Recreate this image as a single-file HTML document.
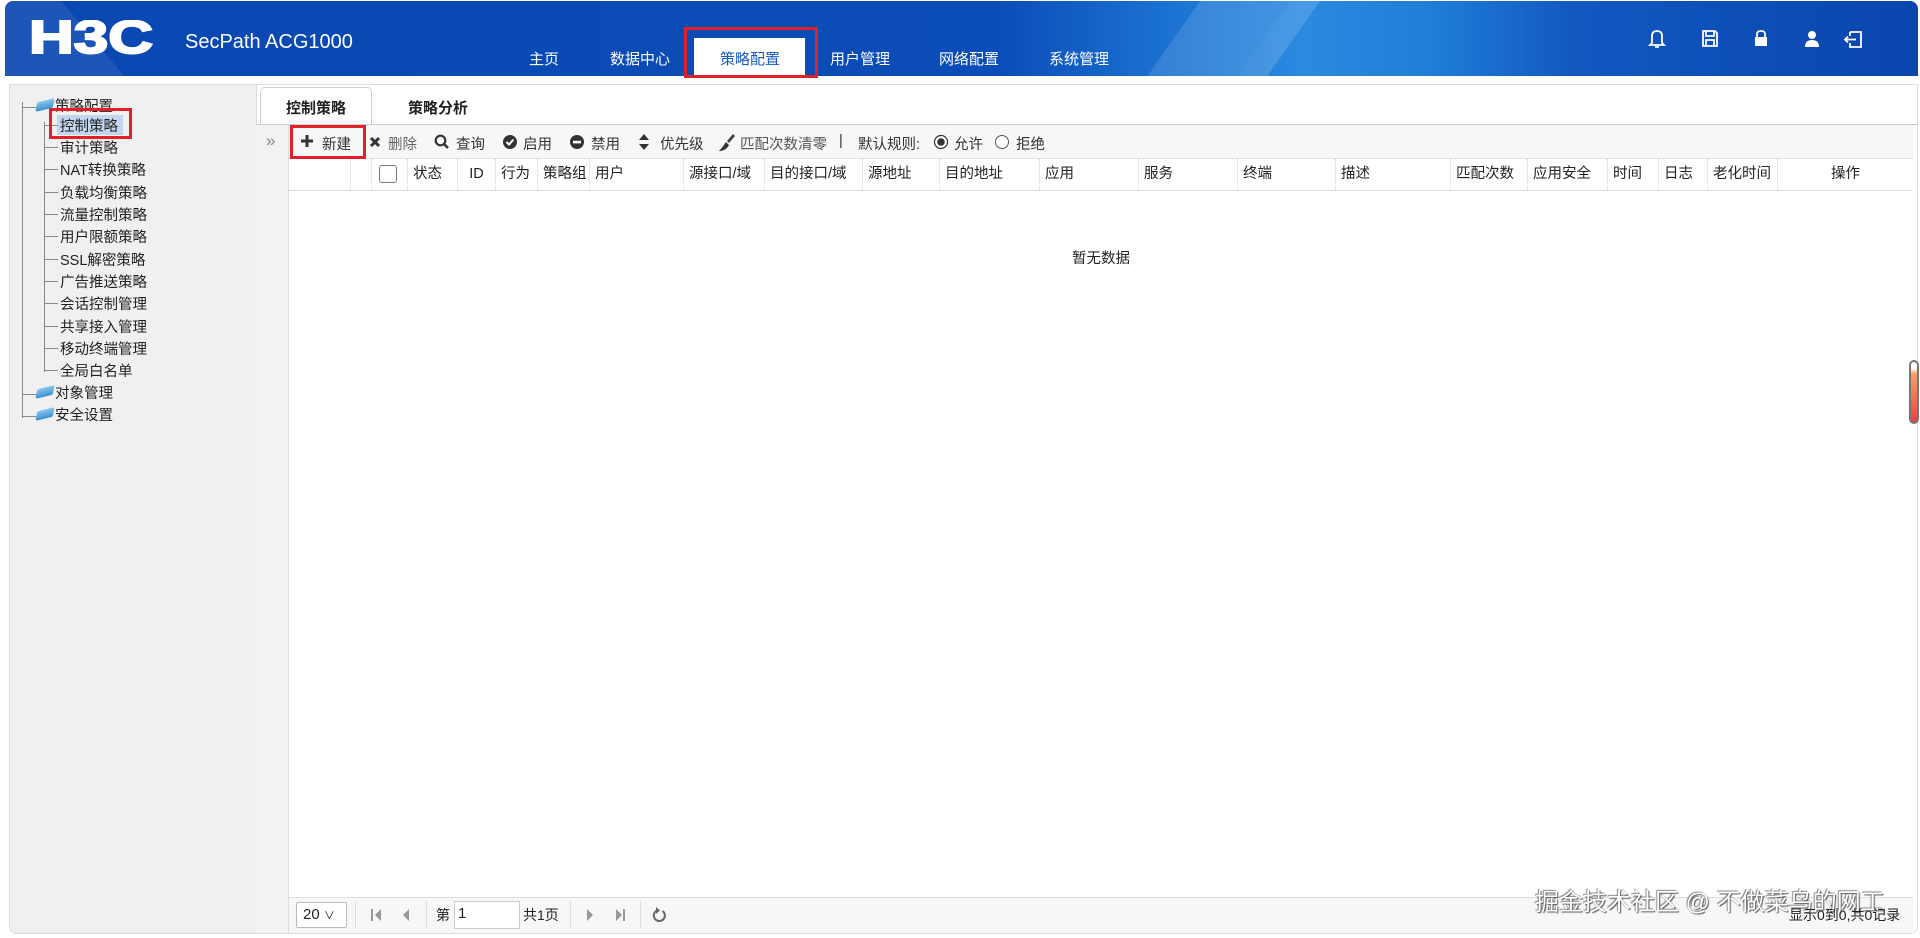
<!DOCTYPE html>
<html><head><meta charset="utf-8">
<style>
*{margin:0;padding:0;box-sizing:border-box}
body{width:1920px;height:938px;overflow:hidden;background:#fff;font-family:"Liberation Sans","Noto Sans CJK SC",sans-serif;font-size:14px;color:#222;position:relative}
.a{position:absolute;white-space:nowrap}
#hdr{left:5px;top:1px;width:1913px;height:75px;border-radius:8px 8px 0 0;overflow:hidden;background:linear-gradient(90deg,#0a47b2 0%,#0b4db8 52%,#1a6fd0 60%,#2a8ae0 68%,#2080d8 74%,#1258c0 82%,#0d4fb8 90%,#0a46ae 100%)}
.nav{top:48px;color:#fff;font-size:15px}
.tr{font-size:14.5px;color:#222}
.th{position:absolute;top:0;height:31px;border-right:1px dotted #d0d0d0;line-height:31px;padding-left:5px;font-size:14.5px}
.tb{top:133px;font-size:14.5px;color:#333}
</style></head><body>
<div id="hdr" class="a">
  <div class="a" style="left:1160px;top:-20px;width:90px;height:140px;background:rgba(255,255,255,.12);transform:skewX(-35deg)"></div>
  <div class="a" style="left:1250px;top:-20px;width:30px;height:140px;background:rgba(255,255,255,.15);transform:skewX(-35deg)"></div>
  <div class="a" style="left:-30px;top:-10px;width:120px;height:100px;background:rgba(255,255,255,.08);transform:skewX(40deg)"></div>
</div>
<svg class="a" style="left:28px;top:20px" width="130" height="36"><text x="1" y="33" font-family="Liberation Sans" font-weight="bold" font-size="46" fill="#fff" stroke="#fff" stroke-width="2" textLength="124" lengthAdjust="spacingAndGlyphs">H3C</text></svg>
<div class="a" style="left:185px;top:31px;color:#fff;font-size:20px">SecPath ACG1000</div>
<div class="a nav" style="left:529px">主页</div>
<div class="a nav" style="left:610px">数据中心</div>
<div class="a" style="left:694px;top:38px;width:111px;height:38px;background:#fff"></div>
<div class="a nav" style="left:720px;color:#1a5bbf">策略配置</div>
<div class="a" style="left:684px;top:27px;width:134px;height:51px;border:3px solid #e0202a"></div>
<div class="a nav" style="left:830px">用户管理</div>
<div class="a nav" style="left:939px">网络配置</div>
<div class="a nav" style="left:1049px">系统管理</div>
<svg class="a" style="left:1647px;top:28px" width="220" height="22" fill="none" stroke="#fff" stroke-width="1.8">
 <path d="M5 15 L5 8 Q5 3 10 3 Q15 3 15 8 L15 15 L17 17 L3 17 Z M8 19 L12 19"/>
 <path d="M56 3 L68 3 L70 5 L70 18 L56 18 Z M59 3 L59 8 L67 8 L67 3 M59 18 L59 12 L67 12 L67 18"/>
 <path d="M110 9 L110 6 Q110 3 114 3 Q118 3 118 6 L118 9"/><rect x="108" y="9" width="12" height="9" fill="#fff" stroke="none"/>
 <circle cx="165" cy="7" r="4" fill="#fff" stroke="none"/><path d="M158 19 Q158 12 165 12 Q172 12 172 19 Z" fill="#fff" stroke="none"/>
 <path d="M203 4 L214 4 L214 19 L203 19 L203 15 M203 8 L203 4 M198 11.5 L209 11.5 M201 8.5 L198 11.5 L201 14.5"/>
</svg>

<!-- sidebar -->
<div class="a" style="left:9px;top:84px;width:247px;height:850px;background:#f0f0f0;border:1px solid #ddd;border-right:none;border-radius:0 0 0 8px"></div>
<div class="a" style="left:22px;top:102px;width:1px;height:316px;background:#888"></div>
<div class="a" style="left:44px;top:122px;width:1px;height:250px;background:#888"></div>
<div class="a" style="left:57px;top:115px;width:66px;height:20px;background:#c2d6ef"></div>
<div id="tree"></div>
<div class="a" style="left:49px;top:108px;width:83px;height:31px;border:3px solid #e0202a"></div>

<!-- main -->
<div class="a" style="left:256px;top:84px;width:1662px;height:850px;border:1px solid #ddd;border-radius:0 0 8px 0"></div>
<div class="a" style="left:260px;top:87px;width:112px;height:38px;background:#fff;border:1px solid #ccc;border-bottom:none;border-radius:5px 5px 0 0"></div>
<div class="a" style="left:286px;top:97px;font-weight:bold;font-size:15px">控制策略</div>
<div class="a" style="left:408px;top:97px;font-weight:bold;font-size:15px">策略分析</div>
<div class="a" style="left:256px;top:124px;width:1662px;height:1px;background:#ccc"></div>
<div class="a" style="left:256px;top:125px;width:33px;height:808px;background:#f2f2f2;border-right:1px solid #ddd"></div>
<div class="a" style="left:266px;top:131px;color:#888;font-size:17px">»</div>
<div class="a" style="left:289px;top:125px;width:1625px;height:34px;background:#f7f7f7;border-bottom:1px solid #e0e0e0"></div>
<svg class="a" style="left:300px;top:134px" width="14" height="14"><path d="M7 1 V13 M1 7 H13" stroke="#333" stroke-width="3"/></svg>
<div class="a tb" style="left:322px">新建</div>
<div class="a" style="left:290px;top:125px;width:76px;height:34px;border:3px solid #e0202a"></div>
<svg class="a" style="left:369px;top:136px" width="12" height="12"><path d="M2 2 L10 10 M10 2 L2 10" stroke="#333" stroke-width="3"/></svg><div class="a tb" style="left:388px;color:#666">删除</div>
<svg class="a" style="left:434px;top:134px" width="16" height="16"><circle cx="6.5" cy="6.5" r="4.8" fill="none" stroke="#333" stroke-width="2.2"/><path d="M10 10 L14 14" stroke="#333" stroke-width="2.6"/></svg>
<div class="a tb" style="left:456px">查询</div>
<svg class="a" style="left:502px;top:134px" width="16" height="16"><circle cx="8" cy="8" r="7" fill="#333"/><path d="M4.5 8 L7 10.5 L11.5 5.5" stroke="#fff" stroke-width="2" fill="none"/></svg>
<div class="a tb" style="left:523px">启用</div>
<svg class="a" style="left:569px;top:134px" width="16" height="16"><circle cx="8" cy="8" r="7" fill="#333"/><rect x="4" y="6.8" width="8" height="2.6" fill="#fff"/></svg>
<div class="a tb" style="left:591px">禁用</div>
<svg class="a" style="left:638px;top:132px" width="12" height="20"><path d="M6 2 L11 8 L1 8 Z M6 18 L11 12 L1 12 Z" fill="#333"/></svg>
<div class="a tb" style="left:660px">优先级</div>
<svg class="a" style="left:717px;top:132px" width="18" height="20"><path d="M16 2 L10 9 L12 11 L18 4 Z" fill="#444"/><path d="M9 10 L12 13 Q9 19 2 19 Q6 15 9 10 Z" fill="#333"/></svg>
<div class="a tb" style="left:740px;color:#555">匹配次数清零</div>
<div class="a tb" style="left:839px">|</div>
<div class="a tb" style="left:858px">默认规则:</div>
<svg class="a" style="left:933px;top:134px" width="16" height="16"><circle cx="8" cy="8" r="6.5" fill="#fff" stroke="#333" stroke-width="1.2"/><circle cx="8" cy="8" r="3.8" fill="#333"/></svg>
<div class="a tb" style="left:954px">允许</div>
<svg class="a" style="left:994px;top:134px" width="16" height="16"><circle cx="8" cy="8" r="6.5" fill="#fff" stroke="#555" stroke-width="1"/></svg>
<div class="a tb" style="left:1016px">拒绝</div>

<!-- table header -->
<div class="a" style="left:289px;top:159px;width:1624px;height:32px;background:#fff;border-bottom:1px solid #ddd" id="thead"></div>
<div class="a" style="left:1072px;top:247px;font-size:14.5px">暂无数据</div>

<!-- footer -->
<div class="a" style="left:289px;top:897px;width:1625px;height:36px;background:#f7f7f7;border-top:1px solid #ddd"></div>
<div class="a" style="left:296px;top:902px;width:51px;height:26px;background:#fff;border:1px solid #bbb;border-radius:2px;font-size:15px;line-height:24px;padding-left:6px">20 <span style="font-size:11px">∨</span></div>
<div class="a" style="left:355px;top:901px;width:1px;height:28px;background:#ddd"></div>
<svg class="a" style="left:368px;top:906px" width="60" height="18" fill="#999"><rect x="3" y="3" width="2" height="12"/><path d="M13 3 L7 9 L13 15 Z"/><path d="M41 3 L35 9 L41 15 Z"/></svg>
<div class="a" style="left:426px;top:901px;width:1px;height:28px;background:#ddd"></div>
<div class="a" style="left:436px;top:905px;font-size:14px">第</div>
<div class="a" style="left:454px;top:901px;width:66px;height:28px;background:#fff;border:1px solid #ccc;font-size:15px;padding:3px 0 0 3px">1</div>
<div class="a" style="left:523px;top:905px;font-size:14px">共1页</div>
<div class="a" style="left:570px;top:901px;width:1px;height:28px;background:#ddd"></div>
<svg class="a" style="left:580px;top:906px" width="60" height="18" fill="#999"><path d="M7 3 L13 9 L7 15 Z"/><path d="M36 3 L42 9 L36 15 Z"/><rect x="43" y="3" width="2" height="12"/></svg>
<div class="a" style="left:640px;top:901px;width:1px;height:28px;background:#ddd"></div>
<svg class="a" style="left:651px;top:906px" width="16" height="18"><path d="M11.5 5 A5.5 5.5 0 1 1 6 4.5" fill="none" stroke="#666" stroke-width="2"/><path d="M5 1 L9 4.5 L5 8 Z" fill="#666"/></svg>
<div class="a" style="left:1535px;top:882px;font-size:24px;color:#fff;text-shadow:1px 1px 1px #555,-1px -1px 1px #888">掘金技术社区 @ 不做菜鸟的网工</div>
<div class="a" style="left:1789px;top:905px;font-size:14px">显示0到0,共0记录</div>
<div class="a" style="left:1909px;top:360px;width:10px;height:64px;border:2px solid #777;border-radius:5px;background:linear-gradient(#fff 10%,#f5a060 20%,#ee4040 100%)"></div>

<script>
var t=[["策略配置",103,1],["控制策略",122,0],["审计策略",144,0],["NAT转换策略",166,0],["负载均衡策略",189,0],["流量控制策略",211,0],["用户限额策略",233,0],["SSL解密策略",256,0],["广告推送策略",278,0],["会话控制管理",300,0],["共享接入管理",323,0],["移动终端管理",345,0],["全局白名单",367,0],["对象管理",390,1],["安全设置",412,1]];
var h="";
t.forEach(function(e){var y=e[1];
 if(e[2]){h+='<div class="a" style="left:22px;top:'+(y+4)+'px;width:16px;height:1px;background:#888"></div>';
  h+='<div class="a" style="left:37px;top:'+(y-3)+'px;width:16px;height:10px;background:linear-gradient(#8cc8ee,#3a90d0);border-radius:2px;transform:skewX(-25deg) rotate(-15deg)"></div>';
  h+='<div class="a tr" style="left:55px;top:'+(y-8)+'px">'+e[0]+'</div>';}
 else{h+='<div class="a" style="left:44px;top:'+(y+3)+'px;width:14px;height:1px;background:#888"></div>';
  h+='<div class="a tr" style="left:60px;top:'+(y-7)+'px">'+e[0]+'</div>';}
});
document.getElementById("tree").outerHTML=h;
var s=[289,351,372,408,458,496,538,590,684,765,863,940,1040,1139,1238,1336,1451,1528,1608,1659,1708,1778,1913];
var n=["","","","状态","ID","行为","策略组","用户","源接口/域","目的接口/域","源地址","目的地址","应用","服务","终端","描述","匹配次数","应用安全","时间","日志","老化时间","操作"];
var g="";
for(var i=0;i<n.length;i++){var st="left:"+(s[i]-289)+"px;width:"+(s[i+1]-s[i])+"px;";
 if(i==4)st+="text-align:center;padding-left:0;";
 if(i==21)st+="text-align:center;padding-left:0;border-right:none;";
 var c=n[i]; if(i==2)c='<span style="display:inline-block;width:18px;height:18px;border:1px solid #777;border-radius:3px;vertical-align:middle;margin-left:2px;background:#fff"></span>';
 g+='<div class="th" style="'+st+'">'+c+'</div>';}
document.getElementById("thead").innerHTML=g;
</script>
</body></html>
